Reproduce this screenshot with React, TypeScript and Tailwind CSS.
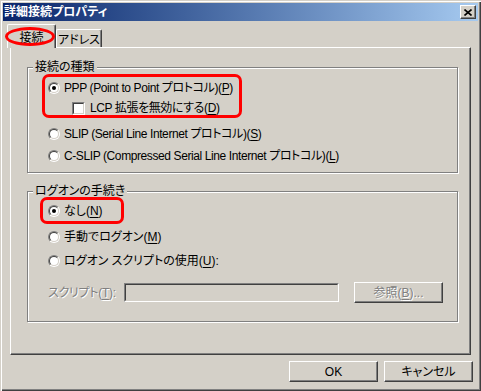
import type { ReactNode } from "react"

const font = "font-['Liberation_Sans','Noto_Sans_CJK_JP',sans-serif] [font-feature-settings:'palt']"

function Radio({ checked }: { checked?: boolean }) {
    return (
        <span className="w-[12px] h-[12px] shrink-0 rounded-full border border-t-[#808080] border-l-[#808080] border-r-white border-b-white flex">
            <span className="w-[10px] h-[10px] rounded-full border border-t-[#404040] border-l-[#404040] border-r-[#d4d0c8] border-b-[#d4d0c8] bg-white flex items-center justify-center">
                {checked && <span className="w-[4px] h-[4px] rounded-full bg-black" />}
            </span>
        </span>
    )
}

function Check() {
    return (
        <span className="w-[13px] h-[13px] shrink-0 border border-t-[#808080] border-l-[#808080] border-r-white border-b-white flex">
            <span className="w-[11px] h-[11px] border border-t-[#404040] border-l-[#404040] border-r-[#d4d0c8] border-b-[#d4d0c8] bg-white" />
        </span>
    )
}

function Key({ k }: { k: string }) {
    return <>(<span className="underline underline-offset-[2px]">{k}</span>)</>
}

function Group({ title, className, children }: { title: string, className?: string, children: ReactNode }) {
    return (
        <div className={"w-[431px] border border-[#808080] shadow-[inset_1px_1px_0_#fff,1px_1px_0_#fff] flex flex-col " + (className ?? "")}>
            <span className="h-[15px] -mt-[8px] -mb-[7px] ml-[5px] px-[2px] w-fit bg-[#d4d0c8] leading-[15px]">{title}</span>
            {children}
        </div>
    )
}

function Btn({ children, disabled }: { children: ReactNode, disabled?: boolean }) {
    return (
        <button className={"w-[89px] h-[21px] bg-[#d4d0c8] border border-t-white border-l-white border-r-[#404040] border-b-[#404040] shadow-[inset_-1px_-1px_0_#808080] flex items-center justify-center " + (disabled ? "text-[#808080] [text-shadow:1px_1px_0_#fff]" : "text-black")}>
            {children}
        </button>
    )
}

export default function App() {
    return (
        <div className={"w-[481px] h-[391px] bg-[#d4d0c8] p-[3px] text-[12px] text-black shadow-[inset_1px_1px_0_#d4d0c8,inset_2px_2px_0_#fff,inset_-1px_-1px_0_#404040,inset_-2px_-2px_0_#808080] flex flex-col " + font}>
            {/* title bar */}
            <div className="h-[18px] bg-gradient-to-r from-[#0a246a] to-[#a6caf0] flex items-center justify-between pl-[1px] pr-[2px]">
                <span className="text-white font-bold leading-none">詳細接続プロパティ</span>
                <span className="w-[16px] h-[14px] bg-[#d4d0c8] border border-t-white border-l-white border-r-[#404040] border-b-[#404040] shadow-[inset_-1px_-1px_0_#808080] flex items-center justify-center">
                    <svg width="8" height="7" viewBox="0 0 8 7">
                        <path d="M0.5 0.5 L7.5 6.5 M7.5 0.5 L0.5 6.5" stroke="#000" strokeWidth="1.6" />
                    </svg>
                </span>
            </div>

            {/* tabs */}
            <div className="h-[26px] flex items-end pl-[4px]">
                <div className="relative z-10 w-[49px] h-[24px] -mb-px bg-[#d4d0c8] border-t border-l border-white border-r border-r-[#404040] rounded-t-[2px] shadow-[inset_-1px_0_0_#808080] flex justify-center pt-[6px]">
                    <span className="leading-[14px]">接続</span>
                    <span className="absolute left-[-3px] top-[2px] w-[50px] h-[19px] border-[3px] border-[#ff0000] rounded-[50%]" />
                </div>
                <div className="w-[46px] h-[18px] border-t border-l border-white border-r border-r-[#404040] rounded-t-[2px] shadow-[inset_-1px_0_0_#808080] flex justify-center pt-[3px]">
                    <span className="leading-[14px]">アドレス</span>
                </div>
            </div>

            {/* panel */}
            <div className="ml-[7px] w-[461px] h-[308px] border-t border-l border-white border-r border-b border-r-[#404040] border-b-[#404040] shadow-[inset_-1px_-1px_0_#808080] flex flex-col pl-[16px] pt-[19px]">
                <Group title="接続の種類" className="pb-[5px]">
                    <div className="mt-[6px] ml-[14px] w-[200px] border-[3px] border-[#ff0000] rounded-[7px] flex flex-col whitespace-nowrap tracking-[-0.4px]">
                        <div className="h-[21px] pl-[3px] flex items-center gap-[4px]">
                            <Radio checked />
                            <span>PPP (Point to Point プロトコル)<Key k="P" /></span>
                        </div>
                        <div className="h-[17px] pl-[27px] flex items-end gap-[5px]">
                            <Check />
                            <span className="leading-[13px]">LCP 拡張を無効にする<Key k="D" /></span>
                        </div>
                    </div>
                    <div className="mt-[5px] h-[22px] pl-[20px] flex items-center gap-[4px] whitespace-nowrap tracking-[-0.4px]">
                        <Radio />
                        <span>SLIP (Serial Line Internet プロトコル)<Key k="S" /></span>
                    </div>
                    <div className="h-[22px] pl-[20px] flex items-center gap-[4px] whitespace-nowrap tracking-[-0.4px]">
                        <Radio />
                        <span>C-SLIP (Compressed Serial Line Internet プロトコル)<Key k="L" /></span>
                    </div>
                </Group>

                <Group title="ログオンの手続き" className="mt-[18px] pb-[18px]">
                    <div className="mt-[5px] ml-[12px] w-[84px] h-[27px] border-[3px] border-[#ff0000] rounded-[7px] pl-[5px] flex items-center gap-[4px]">
                        <Radio checked />
                        <span>なし<Key k="N" /></span>
                    </div>
                    <div className="mt-[1px] h-[24px] pl-[20px] flex items-center gap-[4px]">
                        <Radio />
                        <span>手動でログオン<Key k="M" /></span>
                    </div>
                    <div className="h-[24px] pl-[20px] flex items-center gap-[4px]">
                        <Radio />
                        <span>ログオン スクリプトの使用<Key k="U" />:</span>
                    </div>
                    <div className="mt-[9px] h-[21px] pl-[20px] flex items-center">
                        <span className="w-[76px] text-[#808080] [text-shadow:1px_1px_0_#fff] tracking-[-0.3px]">スクリプト<Key k="T" />:</span>
                        <span className="w-[215px] h-[19px] border border-t-[#808080] border-l-[#808080] border-r-white border-b-white flex">
                            <span className="flex-1 border border-t-[#404040] border-l-[#404040] border-r-[#d4d0c8] border-b-[#d4d0c8]" />
                        </span>
                        <span className="ml-[15px]">
                            <Btn disabled>参照<Key k="B" />...</Btn>
                        </span>
                    </div>
                </Group>
            </div>

            {/* buttons */}
            <div className="mt-[6px] pr-[5px] flex justify-end gap-[6px]">
                <Btn>OK</Btn>
                <Btn>キャンセル</Btn>
            </div>
        </div>
    )
}
